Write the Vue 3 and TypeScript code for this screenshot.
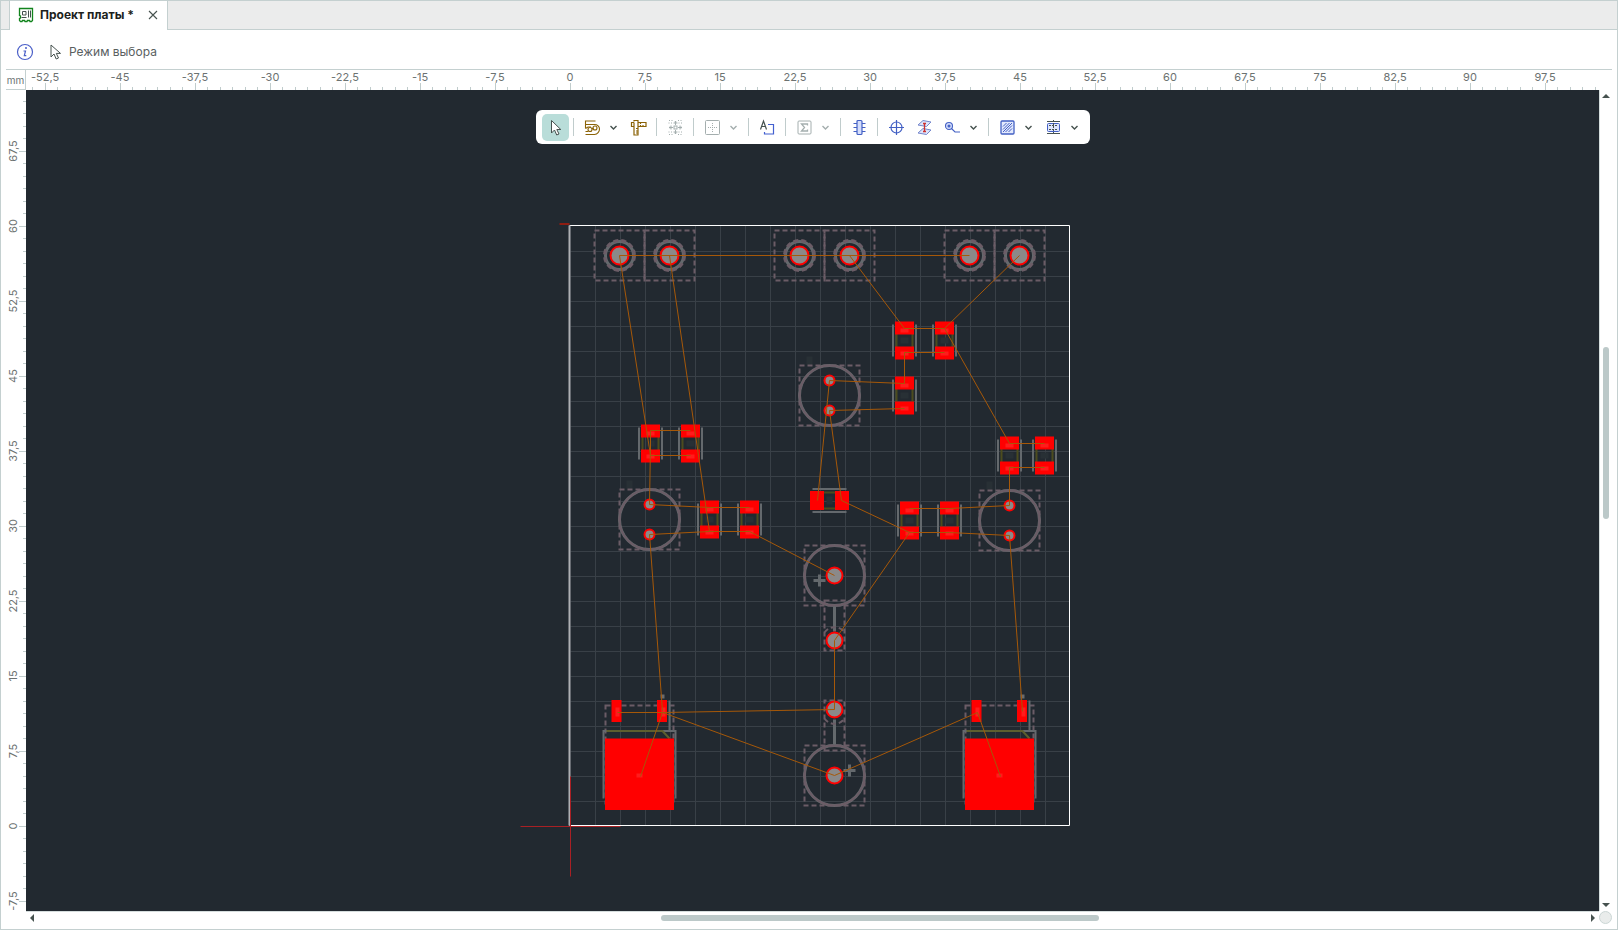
<script setup lang="ts">
interface Point { x: number; y: number }
interface Tick { pos: number; major: boolean; label: string }
interface Tool {
  id: string
  title: string
  menu?: boolean
  active?: boolean
  disabled?: boolean
  sepAfter?: boolean
}

const PX_PER_MM = 10
const STEP_MM = 1.25

function formatMm(v: number): string {
  return String(v).replace('.', ',')
}

/* Ruler ticks; dir is the screen direction in which millimetres grow. */
function buildTicks(origin: number, from: number, to: number, dir: 1 | -1): Tick[] {
  const list: Tick[] = []
  for (let i = from; i <= to; i++) {
    const mm = i * STEP_MM
    list.push({
      pos: Math.floor(origin + dir * mm * PX_PER_MM),
      major: i % 6 === 0,
      label: formatMm(mm),
    })
  }
  return list
}

const hTicks = buildTicks(544, -43, 82, 1)
const vTicks = buildTicks(736, -6, 58, -1)

const tools: Tool[] = [
  { id: 'select', title: 'Режим выбора', active: true, sepAfter: true },
  { id: 'route', title: 'Трассировка', menu: true },
  { id: 'measure', title: 'Измерение', sepAfter: true },
  { id: 'move', title: 'Перемещение', disabled: true, sepAfter: true },
  { id: 'align', title: 'Выравнивание', menu: true, disabled: true, sepAfter: true },
  { id: 'text', title: 'Текст', sepAfter: true },
  { id: 'sum', title: 'Сумма', menu: true, disabled: true, sepAfter: true },
  { id: 'component', title: 'Компонент', sepAfter: true },
  { id: 'target', title: 'Точка привязки' },
  { id: 'via', title: 'Переходное отверстие' },
  { id: 'pad', title: 'Контактная площадка', menu: true, sepAfter: true },
  { id: 'region', title: 'Область', menu: true },
  { id: 'layers', title: 'Слои', menu: true },
]

/* Board items, in pixels from the board origin; y points down. */
const gridX = Array.from({ length: 19 }, (_, i) => 25 + i * 25)
const gridY = Array.from({ length: 23 }, (_, i) => -25 - i * 25)

const terminals: number[] = [49, 99, 229, 279, 399, 449]

const chips: Point[] = [
  { x: 80, y: -383 }, { x: 120, y: -383 },
  { x: 334, y: -486 }, { x: 374, y: -486 },
  { x: 334, y: -431 },
  { x: 439, y: -371 }, { x: 474, y: -371 },
  { x: 139, y: -307 }, { x: 179, y: -307 },
  { x: 339, y: -306 }, { x: 379, y: -306 },
]

const cans: Point[] = [{ x: 259, y: -431 }, { x: 79, y: -307 }, { x: 439, y: -306 }]

const dpaks: number[] = [0, 360]

const nets: string[] = [
  'M49-571H399',
  'M49-571L80-371',
  'M99-571L139-295',
  'M120-396H80V-371H120M80-383L79-322',
  'M279-571L334-498H374L449-571',
  'M374-498L439-383H474',
  'M374-474H334V-443L259-446',
  'M334-418L259-416',
  'M474-359H439V-321L379-318H339',
  'M259-446L247-326',
  'M259-416L271-326L339-294L264-186',
  'M339-294H379L439-291',
  'M79-322L139-319H179',
  'M79-292L139-295H179L264-251',
  'M79-292L92-115',
  'M47-114H92L264-117V-186',
  'M70-50L92-114L264-51L407-114L430-50',
  'M439-291L452-115',
]
</script>

<template>
  <div class="app">
    <header class="tabs" role="tablist">
      <div class="tab" role="tab" aria-selected="true">
        <svg class="tab-icon" width="16" height="16" viewBox="0 0 16 16" fill="none" aria-hidden="true">
          <path d="M1.500 1.500h13v12l-1 1h-1.500l-.5-1h-2l-.5 1h-2l-.5-1h-2l-.5 1h-1.500l-1-1v-2l1-.5v-2l-1-.5z" stroke="#12841d" stroke-width="1.300" />
          <path d="M4.500 4.500h3.500v3.500h-3.500zM3.500 10.500h5M10.500 3.500v7M12.500 3.500v7" stroke="#44504f" />
        </svg>
        <span class="tab-title">Проект платы *</span>
        <button class="close" type="button" aria-label="Закрыть">
          <svg width="10" height="10" viewBox="0 0 10 10"><path d="M1 1l8 8M9 1l-8 8" stroke="#46524f" stroke-width="1.100" /></svg>
        </button>
      </div>
    </header>

    <div class="info">
      <button class="info-btn" type="button" aria-label="Информация">
        <svg width="18" height="18" viewBox="0 0 18 18" fill="none" stroke="#4a5fc8">
          <circle cx="9" cy="9" r="7.500" stroke-width="1.200" />
          <circle cx="10" cy="5" r="1" fill="#4a5fc8" stroke="none" />
          <path d="M7.500 8h2l-1.200 4.700h2" stroke-width="1.200" />
        </svg>
      </button>
      <svg width="12" height="16" viewBox="0 0 12 16" fill="none" stroke="#46524f" aria-hidden="true">
        <path d="M1 1v12l3-3 2.200 5 2.300-1-2.200-4.600H10.500z" />
      </svg>
      <span>Режим выбора</span>
    </div>

    <main class="work">
      <div class="corner">mm</div>
      <svg class="ruler-h" aria-hidden="true">
        <g v-for="t in hTicks" :key="t.pos">
          <rect :x="t.pos" :y="t.major ? 13 : 17" width="1" :height="t.major ? 7 : 3" />
          <text v-if="t.major" :x="t.pos" y="11">{{ t.label }}</text>
        </g>
      </svg>
      <div class="ruler-end"></div>

      <svg class="ruler-v" aria-hidden="true">
        <g v-for="t in vTicks" :key="t.pos">
          <rect :x="t.major ? 13 : 17" :y="t.pos" :width="t.major ? 7 : 3" height="1" />
          <text v-if="t.major" :transform="`translate(11 ${t.pos}) rotate(-90)`">{{ t.label }}</text>
        </g>
      </svg>

      <section class="canvas">
        <svg class="board">
          <g transform="translate(544.5 736.5)">
            <g class="grid">
              <path v-for="x in gridX" :key="x" :d="`M${x} -1V-601`" />
              <path v-for="y in gridY" :key="y" :d="`M0 ${y}H499`" />
            </g>
            <path class="edge" d="M-1-601H499V-1H-1" />
            <path class="edge-left" d="M-1-601V-1" />
            <path class="mark" d="M-11-602.500H-1" />

            <g v-for="x in terminals" :key="x" :transform="`translate(${x} -571)`">
              <rect class="dash" x="-25" y="-25" width="50" height="50" />
              <circle class="silk wide" r="14" />
              <circle class="dash thick" r="15" />
              <circle class="hole" r="9" />
            </g>

            <g v-for="c in chips" :key="`${c.x}${c.y}`" :transform="`translate(${c.x} ${c.y})`">
              <path class="silk" d="M-11.500-16V16M11.500-16V16" />
              <rect class="body" x="-8" y="-8" width="16" height="16" />
              <rect class="ghost" x="-4" y="-3" width="8" height="6" />
              <path class="copper" d="M-9.500-19h19v13h-19zM-9.500 6h19v13h-19z" />
              <path class="glow" d="M-4-12h8v4h-8zM-4 11h8v4h-8z" />
            </g>

            <g transform="translate(259 -326) rotate(90)">
              <path class="silk" d="M-11.500-17V17M11.500-17V17" />
              <rect class="body" x="-8" y="-8" width="16" height="16" />
              <rect class="ghost" x="-4" y="-3" width="8" height="6" />
              <path class="copper" d="M-9.500-19.500h19v14h-19zM-9.500 5.500h19v14h-19z" />
            </g>

            <g v-for="c in cans" :key="`${c.x}${c.y}`" :transform="`translate(${c.x} ${c.y})`">
              <rect class="ghost" x="-23" y="-39" width="6" height="8" />
              <circle class="silk wide" r="30" />
              <circle class="tint" r="30" />
              <rect class="dash" x="-30" y="-30" width="60" height="60" />
              <circle class="hole" cy="-15" r="5" />
              <circle class="hole" cy="15" r="5" />
            </g>

            <g transform="translate(264 -251)">
              <circle class="silk wide" r="30" />
              <circle class="tint" r="30" />
              <path class="silk wide" d="M0 31V56M-21 5h12M-15-1v12" />
              <path class="dash" d="M-30-30h60v60h-60zM-10 25h20v50h-20zM-10 57a12 12 0 0 1 20 0" />
              <circle class="hole" r="8" />
              <circle class="hole" cy="65" r="8" />
            </g>
            <g transform="translate(264 -51)">
              <circle class="silk wide" r="30" />
              <circle class="tint" r="30" />
              <path class="silk wide" d="M0-31V-56M9-5h12M15-11v12" />
              <path class="dash" d="M-30-30h60v60h-60zM-10-25h20v-50h-20zM-10-57a12 12 0 0 0 20 0" />
              <circle class="hole" r="8" />
              <circle class="hole" cy="-66" r="8" />
            </g>

            <g v-for="x in dpaks" :key="x" :transform="`translate(${x} -1)`">
              <rect class="dash" x="35" y="-120" width="68" height="98" />
              <path class="silk" d="M99-125V-94M33-27V-94.500H105V-27" />
              <path class="olive" d="M36-94.500H92L99-87" />
              <rect class="dot" x="90" y="-131" width="4" height="4" />
              <path class="copper" d="M34.500-87h69v71.500h-69zM41-125.500h10v22h-10zM86.500-125.500h10v22h-10z" />
              <path class="glow" d="M66-52h6v4h-6zM45-118h4v9h-4zM91-118h4v9h-4z" />
            </g>

            <g class="net">
              <path v-for="d in nets" :key="d" :d="d" />
            </g>
            <path class="axis" d="M-50 0H50M0-50V50" />
          </g>
        </svg>

        <div class="toolbar" role="toolbar" aria-label="Инструменты">
          <template v-for="t in tools" :key="t.id">
            <button class="tool" :class="{ active: t.active }" type="button" :disabled="t.disabled" :aria-label="t.title">
              <svg width="17" height="17" viewBox="0 0 17 17" fill="none">
                <path v-if="t.id === 'select'" d="M4.500 1.500v12.500l3-3 2.200 5 2.300-1-2.200-4.500h4z" fill="#fff" stroke="#46524f" />
                <g v-else-if="t.id === 'route'" stroke="#8a6206" stroke-width="1.100">
                  <path d="M1.500 9.500V2h10M1.500 5.500h9c3 0 5 2 5 4.500s-2 5.500-5 5.500h-9M1.500 12.500H4M1.500 9.500L4 8h3M8 10l1.500-1" />
                  <circle cx="6" cy="10.500" r="2" /><circle cx="11" cy="9" r="2" />
                </g>
                <g v-else-if="t.id === 'measure'" stroke="#8a6206" stroke-width="1.200">
                  <path d="M4 2.500V1.500h4v2h8v4H8v8.500H4V7.500H1.500v-4H4M4 3.500v4M8 3.500v4M10.500 6v1.500M13 6v1.500M6 9.500h2M6 12h2M6 14h2M10.500 4v1" />
                </g>
                <g v-else-if="t.id === 'move'" stroke="#a4aeae">
                  <rect x="7" y="7" width="3" height="3" />
                  <path d="M8.500 6V2M6.500 4h4M7.500 3h2M8.500 11v4M6.500 13h4M7.500 14h2M6 8.500H2M4 6.500v4M3 7.500v2M11 8.500h4M13 6.500v4M14 7.500v2" />
                  <path d="M2 1.500h4M11 1.500h4M2 15.500h4M11 15.500h4M1.500 4h4M11.500 4h4M1.500 13h4M11.500 13h4" stroke-dasharray="1 1.500" />
                </g>
                <g v-else-if="t.id === 'align'" stroke="#a4aeae">
                  <rect x="1.500" y="1.500" width="14" height="14" rx="1" />
                  <path d="M8.500 4v9M4 8.500h9" stroke-dasharray="1 1" />
                </g>
                <g v-else-if="t.id === 'text'">
                  <path d="M1.500 10.500L4.500 2l3 8.500M2.700 7.500h3.600" stroke="#46524f" stroke-width="1.200" />
                  <path d="M9 5.500h5.500v9.500H5.500V13" stroke="#4360d0" stroke-width="1.200" />
                </g>
                <g v-else-if="t.id === 'sum'" stroke="#a4aeae">
                  <rect x="2" y="2" width="13" height="13" rx="1" />
                  <path d="M11.500 6.500v-1.500h-6L8.500 8.500l-3 3.500h6v-1.500" stroke-width="1.300" />
                </g>
                <g v-else-if="t.id === 'component'" stroke="#4360c4" stroke-width="1.200">
                  <rect x="6" y="1.500" width="5" height="14" rx="1" fill="#d5defc" />
                  <path d="M2.500 4.500H6M2.500 8.500H6M2.500 12.500H6M11 4.500h3.500M11 8.500h3.500M11 12.500h3.500" />
                </g>
                <g v-else-if="t.id === 'target'" stroke="#4360c4" stroke-width="1.200">
                  <circle cx="8.500" cy="8.500" r="5.500" /><path d="M8.500 1v15M1 8.500h15" />
                </g>
                <g v-else-if="t.id === 'via'">
                  <path d="M7 1.500l8 1.500-4.500 4.500-8.500-1.500zM7 9.500l8 1.500-4.500 4.500-8.500-1.500z" fill="#dce4fb" stroke="#7486cc" />
                  <path d="M8.500 4v9M7 4.500h3M7 12.500h3" stroke="#cc3030" stroke-width="1.300" />
                </g>
                <g v-else-if="t.id === 'pad'" stroke="#4360c4" stroke-width="1.100">
                  <circle cx="5" cy="7" r="3.500" fill="#d5defc" /><circle cx="5" cy="7" r="1" fill="#4360c4" />
                  <path d="M7.500 9.500l3.500 3.500h5" />
                </g>
                <g v-else-if="t.id === 'region'" stroke="#4360c4">
                  <rect x="2" y="2" width="13" height="13" rx="1" fill="#e3e9fd" stroke-width="1.300" />
                  <path d="M4 7.500L7.500 4M4 10.500L10.500 4M4 13L13 4M6.500 13L13 6.500M9.500 13L13 9.500" />
                </g>
                <g v-else>
                  <path d="M2 2.500h13M2 14.500h13" stroke="#46524f" />
                  <rect x="2.500" y="4.500" width="12" height="8" rx="1" fill="#dfe6fd" stroke="#4360c4" />
                  <path d="M4 6.500h9M4 10.500h9" stroke="#46524f" stroke-dasharray="2 1" />
                  <path d="M8.500 1v15" stroke="#46524f" stroke-dasharray="2 1" />
                </g>
              </svg>
            </button>
            <button v-if="t.menu" class="chev" type="button" :disabled="t.disabled" :aria-label="`${t.title}: ещё`">
              <svg width="9" height="7" viewBox="0 0 9 7" fill="none"><path d="M1.500 2l3 3 3-3" stroke="currentColor" stroke-width="1.400" /></svg>
            </button>
            <span v-if="t.sepAfter" class="sep"></span>
          </template>
        </div>
      </section>

      <div class="scroll vertical">
        <svg width="8" height="4"><path d="M0 4L4 0l4 4z" /></svg>
        <i class="before"></i><i class="thumb"></i><i class="after"></i>
        <svg width="8" height="4"><path d="M0 0l4 4 4-4z" /></svg>
      </div>

      <div class="scroll-start"></div>
      <div class="scroll horizontal">
        <svg width="4" height="8"><path d="M4 0L0 4l4 4z" /></svg>
        <i class="before"></i><i class="thumb"></i><i class="after"></i>
        <svg width="4" height="8"><path d="M0 0l4 4-4 4z" /></svg>
      </div>
      <div class="grip"><i></i></div>
    </main>
  </div>
</template>

<style>
body {
  margin: 0;
}
</style>

<style scoped>
.app {
  box-sizing: border-box;
  height: 100vh;
  display: flex;
  flex-direction: column;
  border: 1px solid #c4d0d0;
  background: #fff;
  color: #59605f;
  font: 12px/16px Inter, "Liberation Sans", sans-serif;
  overflow: hidden;
}
button {
  display: flex;
  align-items: center;
  justify-content: center;
  padding: 0;
  border: 0;
  background: none;
}
.tabs {
  flex: none;
  display: flex;
  height: 29px;
  padding-left: 8px;
  background: #ebecec;
  box-shadow: inset 0 -1px #c4d0d0;
}
.tab {
  display: flex;
  align-items: center;
  padding: 0 7px 2px 8px;
  border: solid #c4d0d0;
  border-width: 0 1px;
  background: #fff;
}
.tab-title {
  margin: 0 12px 0 6px;
  color: #1c1f20;
  font-weight: 700;
}
.close {
  width: 14px;
  height: 16px;
}
.info {
  flex: none;
  display: flex;
  align-items: center;
  height: 39px;
  padding: 4px 15px 0;
  box-sizing: border-box;
}
.info svg {
  flex: none;
}
.info > svg {
  margin: 0 7px 0 16px;
}
.work {
  flex: 1;
  min-height: 0;
  display: grid;
  grid-template: 21px 1fr 18px / 20px 1fr 13px;
  padding: 0 5px;
}
.corner {
  display: flex;
  align-items: center;
  justify-content: center;
  border: solid #c4d0d0;
  border-width: 1px 1px 1px 0;
  font-size: 10px;
  color: #6c7473;
}
.ruler-h,
.ruler-end {
  width: 100%;
  height: 20px;
  border-top: 1px solid #c4d0d0;
}
.ruler-v {
  width: 20px;
  height: 100%;
  overflow: hidden;
}
.ruler-h rect,
.ruler-v rect {
  fill: #c0cccc;
}
.ruler-h text,
.ruler-v text {
  fill: #6c7271;
  font-size: 11px;
  text-anchor: middle;
}
.canvas {
  position: relative;
  min-width: 0;
  min-height: 0;
  overflow: hidden;
  background: #222930;
}
.board {
  display: block;
  width: 100%;
  height: 100%;
  fill: none;
}
.grid {
  stroke: #394047;
}
.edge {
  stroke: #fff;
}
.edge-left {
  stroke: #aeb0b3;
  stroke-width: 2;
}
.mark {
  stroke: #8e1d12;
  stroke-width: 2;
}
.axis {
  stroke: #a92024;
}
.dash {
  stroke: #6b5c66;
  stroke-width: 2;
  stroke-dasharray: 5 3;
}
.silk {
  stroke: #64696d;
  stroke-width: 2;
}
.wide {
  stroke-width: 3;
}
.thick {
  stroke-width: 3;
}
.tint {
  stroke: #6b5c66;
  stroke-width: 2;
}
.hole {
  fill: #8b8989;
  stroke: #f00;
  stroke-width: 2;
}
.copper {
  fill: #f00;
}
.glow {
  fill: #ff1c1c;
}
.body {
  stroke: #4c4c1e;
  stroke-width: 2;
}
.ghost {
  fill: #283035;
}
.olive {
  stroke: #5c5e2e;
  stroke-width: 2;
}
.dot {
  fill: #6b6b6b;
}
.net {
  stroke: #a65808;
}
.toolbar {
  position: absolute;
  top: 20px;
  left: 50%;
  transform: translateX(-50%);
  display: flex;
  align-items: center;
  gap: 1px;
  height: 34px;
  padding: 0 5px 0 6px;
  border-radius: 6px;
  background: #fff;
}
.tool {
  width: 27px;
  height: 27px;
  border-radius: 5px;
}
.tool.active {
  background: #b9ddd9;
}
.chev {
  width: 13px;
  height: 27px;
  margin-right: 4px;
  color: #46524f;
}
.chev:disabled {
  color: #a4aeae;
}
.sep {
  width: 1px;
  height: 18px;
  margin: 0 4px 0 3px;
  background: #c0cccc;
}
.scroll {
  display: flex;
  align-items: center;
  fill: #46524f;
}
.vertical {
  flex-direction: column;
  border-left: 1px solid #d5dddd;
  padding: 4px 0;
}
.horizontal {
  box-sizing: border-box;
  padding: 0 4px 5px;
  border-top: 1px solid #d5dddd;
}
.scroll .thumb {
  background: #bcc9c9;
  border-radius: 3px;
}
.vertical .thumb {
  width: 6px;
  flex: 172;
}
.vertical .before {
  flex: 249;
}
.vertical .after {
  flex: 384;
}
.horizontal .thumb {
  height: 6px;
  flex: 438;
}
.horizontal .before {
  flex: 627;
}
.horizontal .after {
  flex: 492;
}
.grip i {
  display: block;
  width: 11px;
  height: 11px;
  border: 1px solid #cbd6d5;
  border-radius: 50%;
  background: #e9eceb;
}
</style>
